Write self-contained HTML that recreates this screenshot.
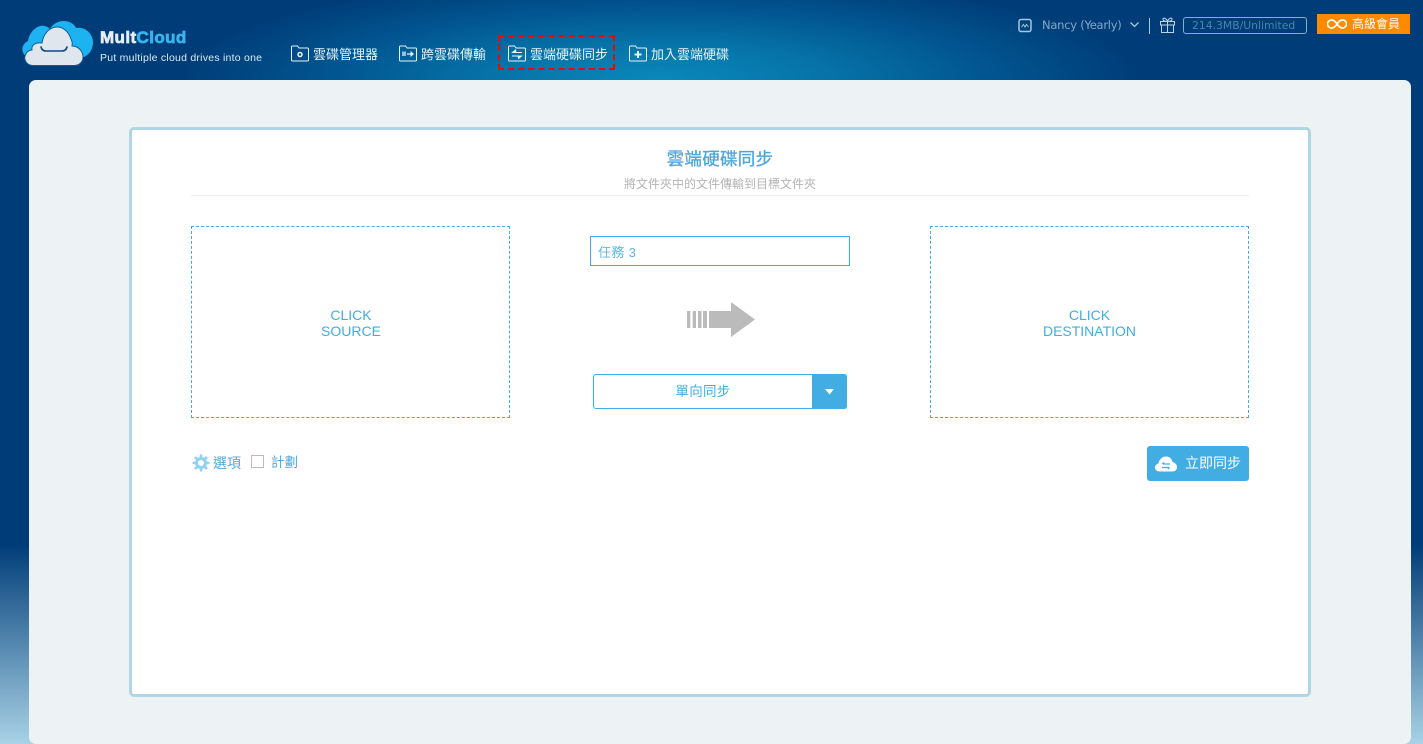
<!DOCTYPE html>
<html lang="zh-Hant"><head><meta charset="utf-8"><title>MultCloud</title>
<style>
*{box-sizing:border-box}
html,body{margin:0;padding:0;width:1423px;height:744px;overflow:hidden}
body{position:relative;background:#003d78;font-family:"Liberation Sans","WenQuanYi Zen Hei","Noto Sans CJK TC",sans-serif}
#wrap{position:absolute;left:0;top:0;width:1423px;height:744px;overflow:hidden}
.a{position:absolute;white-space:nowrap}
#bg{left:0;top:0;width:1423px;height:744px;background:radial-gradient(ellipse 480px 105px at 660px 80px,#0a88ba 0%,#0673a8 35%,#01548f 70%,rgba(0,61,120,0) 100%),linear-gradient(to bottom,#003d78 0,#003d78 545px,#a9d2e6 744px)}
.nav{color:#e8f4fa;font-size:13px;line-height:16px;top:47px}
.blue{color:#41ade2}
</style></head><body><div id="wrap">
<div class="a" id="bg"></div>

<svg class="a" style="left:20px;top:19px" width="76" height="48" viewBox="0 0 76 48">
<path d="M8 39C1 35 0 26 8 22C10 10 22 2 30 10C36 -1 52 0 56 9C65 7 73 15 73 23C73 30 70 35 64 38L10 39Z" fill="#1db2f0"/>
<path d="M13 46.500C6 46.500 4 40 5 37C6 33 9 31 12 31C11 26 16 23 22 24C25 5 45 2 51 20C53 24 52 26 52 27C58 27 63 32 63 38C63 44 58 46.500 54 46.500Z" fill="#dfe6ee" stroke="#0b5e97" stroke-width="1"/>
<path d="M21 28Q22 32 26 32H42Q46 32 47 28" fill="none" stroke="#0d4a7e" stroke-width="1.600" stroke-linecap="round"/>
</svg>
<div class="a" style="left:100px;top:28px;font-size:17px;line-height:20px;font-weight:bold;letter-spacing:.4px;-webkit-text-stroke:.7px currentColor;color:#e6edf4">Mult<span style="color:#38b4ec">Cloud</span></div>
<div class="a" style="left:100px;top:52px;font-size:10.500px;line-height:13px;color:#dcebf4;letter-spacing:.24px">Put multiple cloud drives into one</div>

<svg class="a" style="left:291px;top:45px" width="18" height="17" viewBox="0 0 18 17" fill="none" stroke="#e8f4fa"><path d="M.5 2Q.5 1 1.500 1H6.500L8 3H16.500Q17.500 3 17.500 4V15Q17.500 16 16.500 16H1.500Q.5 16 .5 15Z"/><circle cx="9" cy="9.500" r="2" stroke-width="1.500"/></svg>
<div class="a nav" style="left:313px">雲碟管理器</div>
<svg class="a" style="left:399px;top:45px" width="18" height="17" viewBox="0 0 18 17" fill="none" stroke="#e8f4fa"><path d="M.5 2Q.5 1 1.500 1H6.500L8 3H16.500Q17.500 3 17.500 4V15Q17.500 16 16.500 16H1.500Q.5 16 .5 15Z"/><path d="M4 6.500V11M6 6.500V11M8 9H12" stroke-width="1.300"/><path d="M11.500 6L15 9L11.500 12Z" fill="#e8f4fa" stroke="none"/></svg>
<div class="a nav" style="left:421px">跨雲碟傳輸</div>
<div class="a" style="left:498px;top:35px;width:117px;height:35px;border:2px dashed #f00800"></div>
<svg class="a" style="left:508px;top:45px" width="18" height="17" viewBox="0 0 18 17" fill="none" stroke="#e8f4fa"><path d="M.5 2Q.5 1 1.500 1H6.500L8 3H16.500Q17.500 3 17.500 4V15Q17.500 16 16.500 16H1.500Q.5 16 .5 15Z"/><path d="M7 7.500H14M4 11H11"/><path d="M7.500 5L4.500 7.500H8ZM10.500 13.500L13.500 11H10Z" fill="#e8f4fa"/></svg>
<div class="a nav" style="left:530px">雲端硬碟同步</div>
<svg class="a" style="left:629px;top:45px" width="18" height="17" viewBox="0 0 18 17" fill="none" stroke="#e8f4fa"><path d="M.5 2Q.5 1 1.500 1H6.500L8 3H16.500Q17.500 3 17.500 4V15Q17.500 16 16.500 16H1.500Q.5 16 .5 15Z"/><path d="M9 6V13M5.500 9.500H12.500" stroke-width="2"/></svg>
<div class="a nav" style="left:651px">加入雲端硬碟</div>

<svg class="a" style="left:1018px;top:18px" width="14" height="15" viewBox="0 0 14 15" fill="none"><rect x="1" y="1.500" width="12" height="12" rx="2" stroke="#a9c7dc" stroke-width="1.500"/><path d="M3.500 9L5.500 6.500L7 9L8.500 6.500L10.500 9" stroke="#a9c7dc"/></svg>
<div class="a" style="left:1042px;top:18px;font-size:11.500px;line-height:14px;color:#83a9c9;font-family:'DejaVu Sans',sans-serif;letter-spacing:-.25px">Nancy (Yearly)</div>
<svg class="a" style="left:1129px;top:21px" width="11" height="8" viewBox="0 0 11 8" fill="none"><path d="M1.500 1.500L5.500 5.500L9.500 1.500" stroke="#a9c7dc" stroke-width="1.300"/></svg>
<div class="a" style="left:1149px;top:18px;width:1px;height:16px;background:#a9c7dc"></div>
<svg class="a" style="left:1160px;top:17px" width="15" height="16" viewBox="0 0 15 16" fill="none" stroke="#bcd3e3"><rect x=".5" y="4.500" width="14" height="3.500"/><path d="M1.500 8V15.500H13.500V8M7.500 4.500V15.500M7.500 4.500C5 4.500 2.500 3.500 3 1.500C4.500 .5 7 2 7.500 4.500C8 2 10.500 .5 12 1.500C12.500 3.500 10 4.500 7.500 4.500Z"/></svg>
<div class="a" style="left:1183px;top:17px;width:124px;height:17px;border:1px solid #85aecb;border-radius:3px;color:#4585b0;font:10.800px/15px 'DejaVu Sans',sans-serif;padding-left:8px">214.3MB/Unlimited</div>
<div class="a" style="left:1317px;top:14px;width:93px;height:20px;background:#ff8a00"></div>
<svg class="a" style="left:1327px;top:18px" width="20" height="12" viewBox="0 0 20 12" fill="none"><path d="M10 6C8 3 6.500 2 4.500 2A4 4 0 0 0 4.500 10C6.500 10 8 9 10 6C12 3 13.500 2 15.500 2A4 4 0 0 1 15.500 10C13.500 10 12 9 10 6Z" stroke="#fff" stroke-width="1.700"/></svg>
<div class="a" style="left:1352px;top:16px;font-size:12px;line-height:16px;color:#fff">高級會員</div>

<div class="a" style="left:29px;top:80px;width:1382px;height:664px;background:#edf2f5;border-radius:7px"></div>
<div class="a" style="left:129px;top:127px;width:1182px;height:570px;background:#fff;border:3px solid #b1d6e3;border-radius:5px"></div>

<div class="a" style="left:130px;width:1180px;text-align:center;top:149px;font-size:17.500px;line-height:20px;-webkit-text-stroke:.3px #4ea6da;color:#4ea6da;letter-spacing:.3px">雲端硬碟同步</div>
<div class="a" style="left:130px;width:1180px;text-align:center;top:177px;font-size:12px;line-height:15px;color:#b4b4b4">將文件夾中的文件傳輸到目標文件夾</div>
<div class="a" style="left:191px;top:195px;width:1058px;height:1px;background:#eeeeee"></div>

<div class="a blue" style="left:191px;top:226px;width:319px;height:192px;border:1px dashed #41ade2;text-align:center;font-size:14px;line-height:16px;padding-top:80px;padding-left:1px">CLICK<br>SOURCE</div>
<div class="a blue" style="left:930px;top:226px;width:319px;height:192px;border:1px dashed #41ade2;text-align:center;font-size:14px;line-height:16px;padding-top:80px">CLICK<br>DESTINATION</div>

<div class="a" style="left:590px;top:236px;width:260px;height:30px;border:1px solid #41ade2;color:#5fb6e5;font-size:13px;line-height:30px;padding-left:7px;padding-top:1px;letter-spacing:.35px">任務 3</div>

<svg class="a" style="left:687px;top:302px" width="68" height="35" viewBox="0 0 68 35" fill="#bbbbbb"><rect x="0" y="9" width="3.300" height="17"/><rect x="5.700" y="9" width="3.300" height="17"/><rect x="11" y="9" width="3.500" height="17"/><rect x="16" y="9" width="4" height="17"/><path d="M22 9H44V0L68 17.500L44 35V26H22Z"/></svg>

<div class="a blue" style="left:593px;top:374px;width:254px;height:35px;border:1px solid #41ade2;border-radius:3px;text-align:center;font-size:13.500px;line-height:33px;padding-right:34px;letter-spacing:.3px">單向同步</div>
<div class="a" style="left:812px;top:374px;width:35px;height:35px;background:#41ade2;border-radius:0 3px 3px 0"></div>
<svg class="a" style="left:824px;top:388px" width="12" height="8" viewBox="0 0 12 8"><path d="M1 1H10L5.500 6.500Z" fill="#fff"/></svg>

<svg class="a" style="left:192px;top:454px" width="18" height="18" viewBox="0 0 18 18"><g stroke="#8fd2f2" stroke-width="3" fill="none"><circle cx="9" cy="9" r="4.500"/><path d="M9 .5V3.500M9 14.500V17.500M.5 9H3.500M14.500 9H17.500M3 3L5.100 5.100M12.900 12.900L15 15M3 15L5.100 12.900M12.900 5.100L15 3" stroke-width="2.600"/></g></svg>
<div class="a" style="left:213px;top:455px;font-size:14px;line-height:16px;color:#55a7dc">選項</div>
<div class="a" style="left:251px;top:455px;width:13px;height:13px;border:1px solid #bbb"></div>
<div class="a" style="left:271px;top:455px;font-size:13.500px;line-height:16px;color:#4ea9e0">計劃</div>

<div class="a" style="left:1147px;top:446px;width:102px;height:35px;background:#41ade2;border-radius:3px"></div>
<svg class="a" style="left:1155px;top:456px" width="22" height="16" viewBox="0 0 22 16"><path d="M5 15.500C1.500 15.500 0 13.500 0 11.500C0 9.500 1.500 8 3.500 7.500C4 3 8 0 12 .5C15 1 17 3 17.500 6C20 6.500 22 8.500 22 11C22 14 20 15.500 17 15.500Z" fill="#fff"/><path d="M8 8H15M7 11.500H14" stroke="#41ade2" stroke-width="1.200"/><path d="M9 5.800L6.500 8H9.500ZM13 13.700L15.500 11.500H12.500Z" fill="#41ade2"/></svg>
<div class="a" style="left:1185px;top:455px;font-size:14px;line-height:17px;color:#fff">立即同步</div>
</div></body></html>
